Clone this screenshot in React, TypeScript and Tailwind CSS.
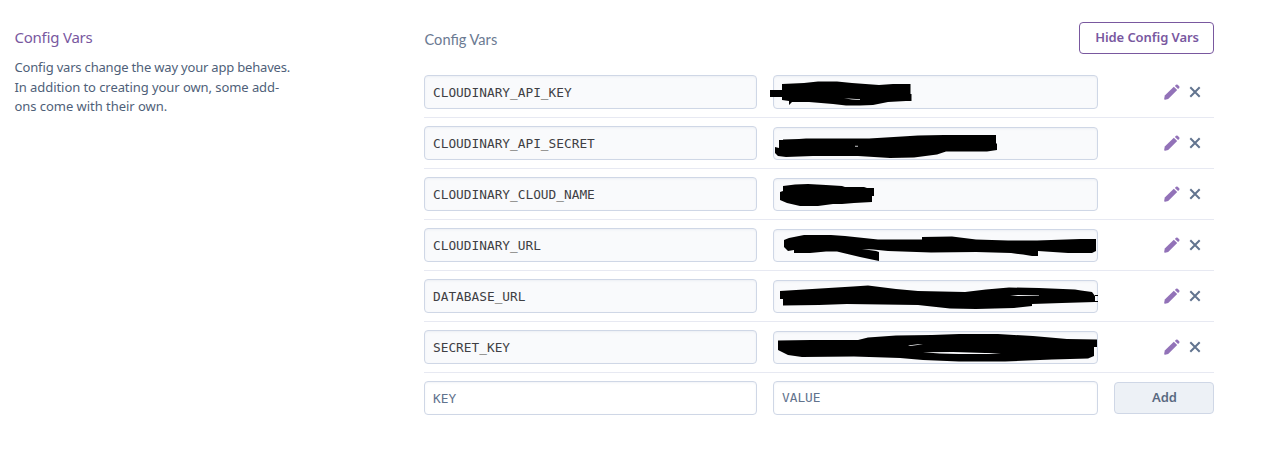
type ConfigVar = { name: string; mask: string; gaps?: string };

const vars: ConfigVar[] = [
  {
    name: 'CLOUDINARY_API_KEY',
    mask: 'M1 23H13V17L35 16L49 14.5H68L83 16L110 18L124 17H141.5V27H142.5V34H137L119 35L104 38L91 38.5H77L64 37L40 35L23 35L20 38V34L13 33V30H1Z',
    gaps: 'M75 31.3L91 32.3V33L83 32.5Z',
  },
  {
    name: 'CLOUDINARY_API_SECRET',
    mask: 'M10 22H14V21.5L30 21L37 20.5H100L133 18.5L149 17.5L175 17H227V25L228 26V32L218 33.5H177L168 36.5L145 39.5L121 40L89 38L44 38L17 39L9 38L6 35V29L10 30Z',
    gaps: 'M86 27.8H89V28.6H86Z',
  },
  {
    name: 'CLOUDINARY_CLOUD_NAME',
    mask: 'M11 23L14 22V17L26 15.5L39 15L57 16L73 17L76 18H95L98 19H105V27H103V33L85 34L73 35H64L49 37H31L18 34L11 31Z',
  },
  {
    name: 'CLOUDINARY_URL',
    mask: 'M15 20L20 18L35 15H62L76 16L109 19.5H153V17L183 16.5L207 19.5L239 20.5H268L311 19H327V31L323 33H299L269 31V36H263L254 34.5L242 33L207 32L162 32.5L119 31L104 29.5L93 29L107 31L110 32V41L91 37L68 31.5H57L41 33H25V30L19 31L15 27Z',
  },
  {
    name: 'DATABASE_URL',
    mask: 'M11 20L35 18.5L84 15.5L99 14.5L127 18L149 20L196 21L217 18.5L240 16.5L270 17L306 18.5L312 19.5L323 21L326 25V31L293 32L263 33V35L245 37L207 38L181 37.5L158 35L149 34L78 33L50 34L14 34.5V28H11Z M326 24H329V25H326Z M326 30H329V31H326Z',
    gaps: 'M241 25L249 24L270 24.4V25H241Z',
  },
  {
    name: 'SECRET_KEY',
    mask: 'M9 18.5L42 18L89 18L99 15.5L127 13.5L163 13L190 12L229 12L264 14L298 17L328 17.5V25H325V34L319 36.5L283 37.5L236 39.5L190 39.5L154 38L131 36L85 34.5L33 35L19 33L9 28Z',
    gaps: 'M139 23.5L149 22.3H154L141 24Z M154 30.3L184 30L216 31L232 31.2L220 32H190L171 31.6Z',
  },
];

function Pencil() {
  return (
    <svg width="16" height="16" viewBox="0 0 16 16" fill="#9272b8">
      <path d="M.2 14.8.8 11.6 9.8 2.7 13.2 6.1 4.2 14.9 1.1 15.8Q.1 15.9.2 14.8Z" />
      <path d="M10.9 1.9 12 .8Q12.9.1 13.7.8L15.2 2.3Q15.9 3.1 15.2 3.9L14.1 5Z" />
    </svg>
  );
}

function Cross() {
  return (
    <svg width="12" height="12" viewBox="0 0 12 12" fill="none" stroke="#62748f" strokeWidth="2">
      <path d="M1.3 1.3 10.7 10.7M10.7 1.3 1.3 10.7" />
    </svg>
  );
}

const field =
  'block w-full rounded-[4px] border border-[#cfd7e6] px-2 font-["DejaVu_Sans_Mono",monospace] text-[12.8px] shadow-[inset_0_1px_2px_rgba(207,215,230,0.3)] outline-none placeholder:text-[#62738d] placeholder:opacity-100';

export default function App() {
  return (
    <main className="flex h-[471px] w-[1262px] overflow-hidden bg-white font-['Noto_Sans',sans-serif] text-[#596981]">
      <aside className="w-[424px] shrink-0 pl-[14.5px] pt-[26px] [font-feature-settings:'liga']">
        <h2 className="text-[15px] leading-[22px] tracking-[-0.25px] text-[#79589f]">Config Vars</h2>
        <p className="mt-[10px] w-[290px] text-[13px] leading-[19.5px] text-[#4f5f79]">
          <span className="tracking-[-0.19px]">Config vars change the way your app behaves.</span>
          <br />
          <span className="tracking-[-0.07px]">In addition to creating your own, some add-</span>
          <br />
          <span className="tracking-[-0.04px]">ons come with their own.</span>
        </p>
      </aside>
      <section className="w-[790px]">
        <header className="flex h-[67px] items-start justify-between pt-[22px]">
          <h3 className="ml-[0.5px] mt-[7px] font-['Lato',sans-serif] text-[14.6px] leading-[22px] text-[#6b7a92]">Config Vars</h3>
          <button className="h-8 w-[135px] rounded-[4px] border border-[#79589f] pl-px text-[13px] font-semibold tracking-[-0.08px] text-[#79589f] [font-feature-settings:'liga']">
            Hide Config Vars
          </button>
        </header>
        {vars.map((item, i) => (
          <div key={item.name} className="flex h-[51px] border-b border-[#e7e9f2] pt-2">
            <div className="w-[333px]">
              <input readOnly defaultValue={item.name} className={`${field} h-[34px] bg-[#f9fafc] pt-px text-[#3f3f44]`} />
            </div>
            <div className="relative ml-4 w-[325px]">
              <div className={`${field} bg-[#f9fafc] ${i === 0 ? 'h-[34px]' : 'mt-px h-[33px]'}`} />
              <svg
                className="absolute -left-1 -top-2"
                width="333"
                height="50"
                viewBox="0 0 333 50"
              >
                <path d={item.mask} />
                {item.gaps && <path d={item.gaps} fill="#f9fafc" />}
              </svg>
            </div>
            <div className="ml-[66px] flex h-[34px] items-center gap-[9px]">
              <button aria-label="Edit">
                <Pencil />
              </button>
              <button aria-label="Remove">
                <Cross />
              </button>
            </div>
          </div>
        ))}
        <div className="flex pt-2">
          <div className="w-[333px]">
            <input placeholder="KEY" className={`${field} h-[34px] bg-white pt-px`} />
          </div>
          <div className="ml-4 w-[325px]">
            <input placeholder="VALUE" className={`${field} h-[34px] bg-white pb-[2px]`} />
          </div>
          <button className="ml-4 mt-px h-8 w-[100px] rounded-[4px] border border-[#cfd7e6] bg-[#edf1f6] pl-px text-[13px] font-semibold text-[#596981]">
            Add
          </button>
        </div>
      </section>
    </main>
  );
}
